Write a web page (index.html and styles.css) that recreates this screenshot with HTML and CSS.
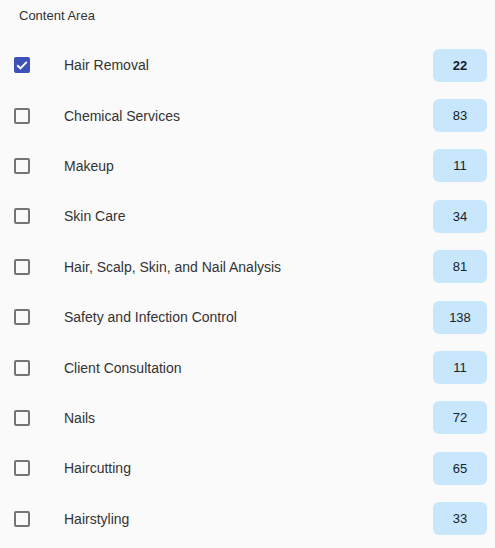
FILE: index.html
```html
<!DOCTYPE html>
<html>
<head>
<meta charset="utf-8">
<link rel="stylesheet" href="styles.css">
</head>
<body>
<div class="panel">
  <div class="title">Content Area</div>
  <ul class="list">
    <li class="row checked"><span class="box"><svg viewBox="0 0 16 16" width="16" height="16"><path d="M3.2 8.2l3.2 3.1 6.4-6.4" fill="none" stroke="#fff" stroke-width="1.9"/></svg></span><span class="label">Hair Removal</span><span class="badge">22</span></li>
    <li class="row"><span class="box"></span><span class="label">Chemical Services</span><span class="badge">83</span></li>
    <li class="row"><span class="box"></span><span class="label">Makeup</span><span class="badge">11</span></li>
    <li class="row"><span class="box"></span><span class="label">Skin Care</span><span class="badge">34</span></li>
    <li class="row"><span class="box"></span><span class="label">Hair, Scalp, Skin, and Nail Analysis</span><span class="badge">81</span></li>
    <li class="row"><span class="box"></span><span class="label">Safety and Infection Control</span><span class="badge">138</span></li>
    <li class="row"><span class="box"></span><span class="label">Client Consultation</span><span class="badge">11</span></li>
    <li class="row"><span class="box"></span><span class="label">Nails</span><span class="badge">72</span></li>
    <li class="row"><span class="box"></span><span class="label">Haircutting</span><span class="badge">65</span></li>
    <li class="row"><span class="box"></span><span class="label">Hairstyling</span><span class="badge">33</span></li>
  </ul>
</div>
</body>
</html>
```
FILE: styles.css
```css
html, body {
  margin: 0;
  padding: 0;
  background: #fafafa;
  font-family: "Liberation Sans", Arial, sans-serif;
}
.panel {
  padding: 8px 8px 0 14px;
}
.title {
  font-size: 13px;
  color: #333;
  padding-left: 5px;
  height: 16px;
  line-height: 16px;
  margin-bottom: 16px;
}
.list {
  list-style: none;
  margin: 0;
  padding: 0;
}
.row {
  display: flex;
  align-items: center;
  height: 50.4px;
}
.box {
  width: 16px;
  height: 16px;
  box-sizing: border-box;
  border: 2px solid #757575;
  border-radius: 2px;
  flex: none;
  position: relative;
}
.checked .box {
  background: #3f51b5;
  border-color: #3f51b5;
}
.box svg {
  position: absolute;
  left: -2px;
  top: -2px;
  width: 16px;
  height: 16px;
}
.label {
  margin-left: 34px;
  flex: 1;
  font-size: 14px;
  color: #333;
}
.badge {
  width: 54px;
  height: 33px;
  border-radius: 6px;
  background: #c8e7fd;
  color: #16202a;
  font-size: 13px;
  display: flex;
  align-items: center;
  justify-content: center;
  flex: none;
}
.checked .badge {
  font-weight: bold;
}
```
